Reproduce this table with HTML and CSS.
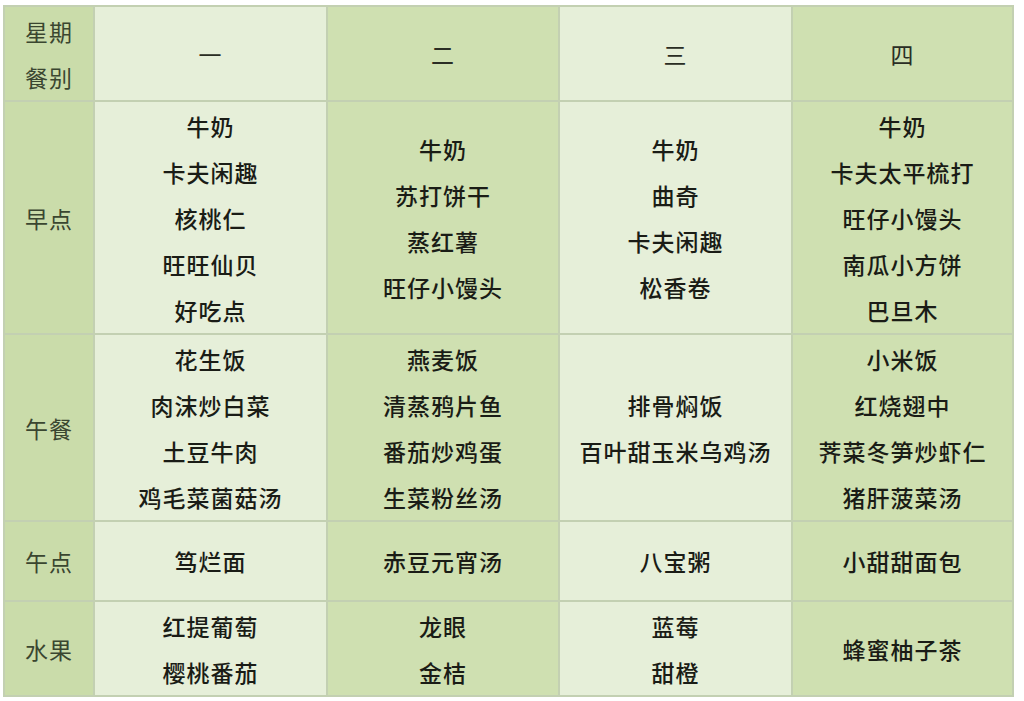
FILE: index.html
```html
<!DOCTYPE html>
<html lang="zh">
<head>
<meta charset="utf-8">
<link rel="stylesheet" href="styles.css">
</head>
<body>
<table class="menu">
  <colgroup>
    <col class="c0"><col class="c1"><col class="c2"><col class="c3"><col class="c4">
  </colgroup>
  <tr class="r-head">
    <th class="side head-side">星期<br>餐别</th>
    <th class="light day">一</th>
    <th class="dark day">二</th>
    <th class="light day">三</th>
    <th class="dark day">四</th>
  </tr>
  <tr class="r-break">
    <th class="side">早点</th>
    <td class="light">牛奶<br>卡夫闲趣<br>核桃仁<br>旺旺仙贝<br>好吃点</td>
    <td class="dark">牛奶<br>苏打饼干<br>蒸红薯<br>旺仔小馒头</td>
    <td class="light">牛奶<br>曲奇<br>卡夫闲趣<br>松香卷</td>
    <td class="dark">牛奶<br>卡夫太平梳打<br>旺仔小馒头<br>南瓜小方饼<br>巴旦木</td>
  </tr>
  <tr class="r-lunch">
    <th class="side">午餐</th>
    <td class="light">花生饭<br>肉沫炒白菜<br>土豆牛肉<br>鸡毛菜菌菇汤</td>
    <td class="dark">燕麦饭<br>清蒸鸦片鱼<br>番茄炒鸡蛋<br>生菜粉丝汤</td>
    <td class="light">排骨焖饭<br>百叶甜玉米乌鸡汤</td>
    <td class="dark">小米饭<br>红烧翅中<br>荠菜冬笋炒虾仁<br>猪肝菠菜汤</td>
  </tr>
  <tr class="r-snack">
    <th class="side">午点</th>
    <td class="light">笃烂面</td>
    <td class="dark">赤豆元宵汤</td>
    <td class="light">八宝粥</td>
    <td class="dark">小甜甜面包</td>
  </tr>
  <tr class="r-fruit">
    <th class="side">水果</th>
    <td class="light">红提葡萄<br>樱桃番茄</td>
    <td class="dark">龙眼<br>金桔</td>
    <td class="light">蓝莓<br>甜橙</td>
    <td class="dark">蜂蜜柚子茶</td>
  </tr>
</table>
</body>
</html>
```

FILE: styles.css
```css
html, body {
  margin: 0;
  padding: 0;
  background: #ffffff;
}

body {
  font-family: "Noto Sans CJK SC", "Noto Sans", sans-serif;
  color: #1a1c16;
}

.menu {
  margin: 5px 0 0 3px;
  width: 1009px;
  table-layout: fixed;
  border-collapse: collapse;
  border: 2px solid #bfcbb0;
}

.c0 { width: 90px; }
.c1 { width: 233px; }
.c2 { width: 232px; }
.c3 { width: 233px; }
.c4 { width: 221px; }

.menu th,
.menu td {
  border: 2px solid #c3d0b2;
  padding: 0;
  text-align: center;
  vertical-align: middle;
  font-size: 23px;
  font-weight: 500;
  line-height: 46px;
  letter-spacing: 1px;
}

.side {
  background: #cadcaa;
  color: #3a4630;
  font-size: 22px;
}

.menu .side {
  font-weight: 400;
}

.menu .day {
  font-weight: 400;
  color: #2a2d24;
}

.head-side {
  line-height: 44px;
}

.light { background: #e6efd9; }
.dark { background: #cfe0b1; }

.r-head { height: 95px; }
.r-break { height: 233px; }
.r-lunch { height: 187px; }
.r-snack { height: 80px; }
.r-fruit { height: 95px; }
```
